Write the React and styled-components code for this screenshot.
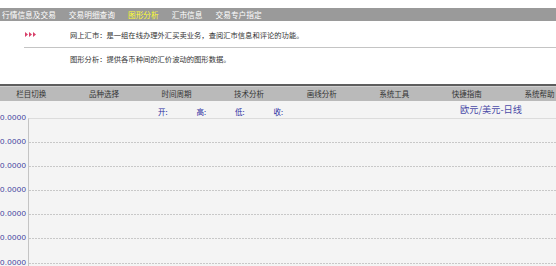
import React from 'react';
import styled, { createGlobalStyle } from 'styled-components';

const GlobalStyle = createGlobalStyle`
  html, body {
    margin: 0;
    padding: 0;
    background: #ffffff;
    overflow: hidden;
  }
  body {
    font-family: "Noto Sans CJK SC", "Liberation Sans", sans-serif;
  }
`;

const navItems = ['行情信息及交易', '交易明细查询', '图形分析', '汇市信息', '交易专户指定'];
const tools = ['栏目切换', '品种选择', '时间周期', '技术分析', '画线分析', '系统工具', '快捷指南', '系统帮助'];
const prices = ['开:', '高:', '低:', '收:'];
const axisLabels = Array.from({ length: 7 }, () => '0.0000');

function Arrows() {
  return (
    <svg width='11' height='5' viewBox='0 0 11 5'>
      {[0, 4, 8].map((x) => (
        <polygon key={x} points={`${x},0 ${x + 3},2.5 ${x},5`} fill='#d8406a' />
      ))}
    </svg>
  );
}

function App() {
  return (
    <Page>
      <GlobalStyle />
      <NavBar>
        {navItems.map((item) => (
          <NavItem key={item} active={item === '图形分析'}>{item}</NavItem>
        ))}
      </NavBar>

      <Intro>
        <IntroRow divider>
          <Marker><Arrows /></Marker>
          <IntroText>网上汇市：是一组在线办理外汇买卖业务，查阅汇市信息和评论的功能。</IntroText>
        </IntroRow>
        <IntroRow>
          <Marker />
          <IntroText>图形分析：提供各币种间的汇价波动的图形数据。</IntroText>
        </IntroRow>
      </Intro>

      <Toolbar>
        {tools.map((t) => (
          <Tool key={t}>{t}</Tool>
        ))}
      </Toolbar>

      <ChartPanel>
        <Axis>
          {axisLabels.map((v, i) => (
            <AxisLabel key={i}>{v}</AxisLabel>
          ))}
        </Axis>
        <InfoRow>
          {prices.map((p) => (
            <Price key={p}>{p}</Price>
          ))}
          <Title>欧元/美元-日线</Title>
        </InfoRow>
        <Plot>
          {Array.from({ length: 6 }, (_, i) => (
            <GridRow key={i} />
          ))}
        </Plot>
      </ChartPanel>
    </Page>
  );
}

const Page = styled.div`
  width: 556px;
  height: 266px;
  display: flex;
  flex-direction: column;
  padding-top: 8px;
  box-sizing: border-box;
  overflow: hidden;
`;

const NavBar = styled.div`
  height: 13px;
  background: #9a9a9a;
  display: flex;
  align-items: center;
  gap: 13px;
  padding-left: 2px;
`;

const NavItem = styled.span`
  font-size: 7.7px;
  line-height: 13px;
  color: ${(p) => (p.active ? '#ffff33' : '#ffffff')};
  white-space: nowrap;
`;

const Intro = styled.div`
  padding-left: 24px;
  display: flex;
  flex-direction: column;
`;

const IntroRow = styled.div`
  display: grid;
  grid-template-columns: 46px 1fr;
  align-items: center;
  height: ${(p) => (p.divider ? '25px' : '22px')};
  border-bottom: ${(p) => (p.divider ? '1px solid #c4c4c4' : 'none')};
  padding-top: ${(p) => (p.divider ? '1px' : '0')};
`;

const Marker = styled.div`
  display: flex;
  align-items: center;
  padding-left: 1px;
`;

const IntroText = styled.span`
  font-size: 7.3px;
  color: #333333;
  white-space: nowrap;
`;

const Toolbar = styled.div`
  margin-top: 14px;
  margin-left: -5px;
  display: grid;
  grid-template-columns: repeat(8, 72.6px);
  height: 15px;
  border-top: 2px solid #5e5e5e;
  box-shadow: inset 0 1px 0 #d0d0d0;
  background: #bababa;
`;

const Tool = styled.span`
  font-size: 7.5px;
  line-height: 15px;
  color: #333333;
  text-align: center;
  white-space: nowrap;
`;

const ChartPanel = styled.div`
  flex: 1;
  background: #f4f4f4;
  display: grid;
  grid-template-columns: 28px 1fr;
  grid-template-rows: 17px 1fr;
`;

const Axis = styled.div`
  grid-row: 1 / span 2;
  padding-top: 12px;
  display: flex;
  flex-direction: column;
`;

const AxisLabel = styled.span`
  height: 24.1px;
  font-family: "Liberation Sans", sans-serif;
  font-size: 8px;
  line-height: 10px;
  letter-spacing: 0.3px;
  color: #3c3c9c;
  white-space: nowrap;
`;

const InfoRow = styled.div`
  display: flex;
  align-items: center;
  padding-left: 130px;
  padding-right: 34px;
`;

const Price = styled.span`
  width: 38.5px;
  padding-top: 5px;
  font-size: 7.5px;
  line-height: 10px;
  color: #2a2aa0;
`;

const Title = styled.span`
  margin-left: auto;
  padding-bottom: 1px;
  font-size: 9.2px;
  line-height: 12px;
  color: #4b4ba8;
  white-space: nowrap;
`;

const Plot = styled.div`
  border-top: 1px solid #dcdcdc;
  border-left: 1px solid #c4c4c4;
  display: flex;
  flex-direction: column;
`;

const GridRow = styled.div`
  height: 24.1px;
  flex-shrink: 0;
  box-sizing: border-box;
  background-image: linear-gradient(to right, #c8c8c8 60%, transparent 60%);
  background-size: 3px 1px;
  background-repeat: repeat-x;
  background-position: left bottom;
`;

export default App;
